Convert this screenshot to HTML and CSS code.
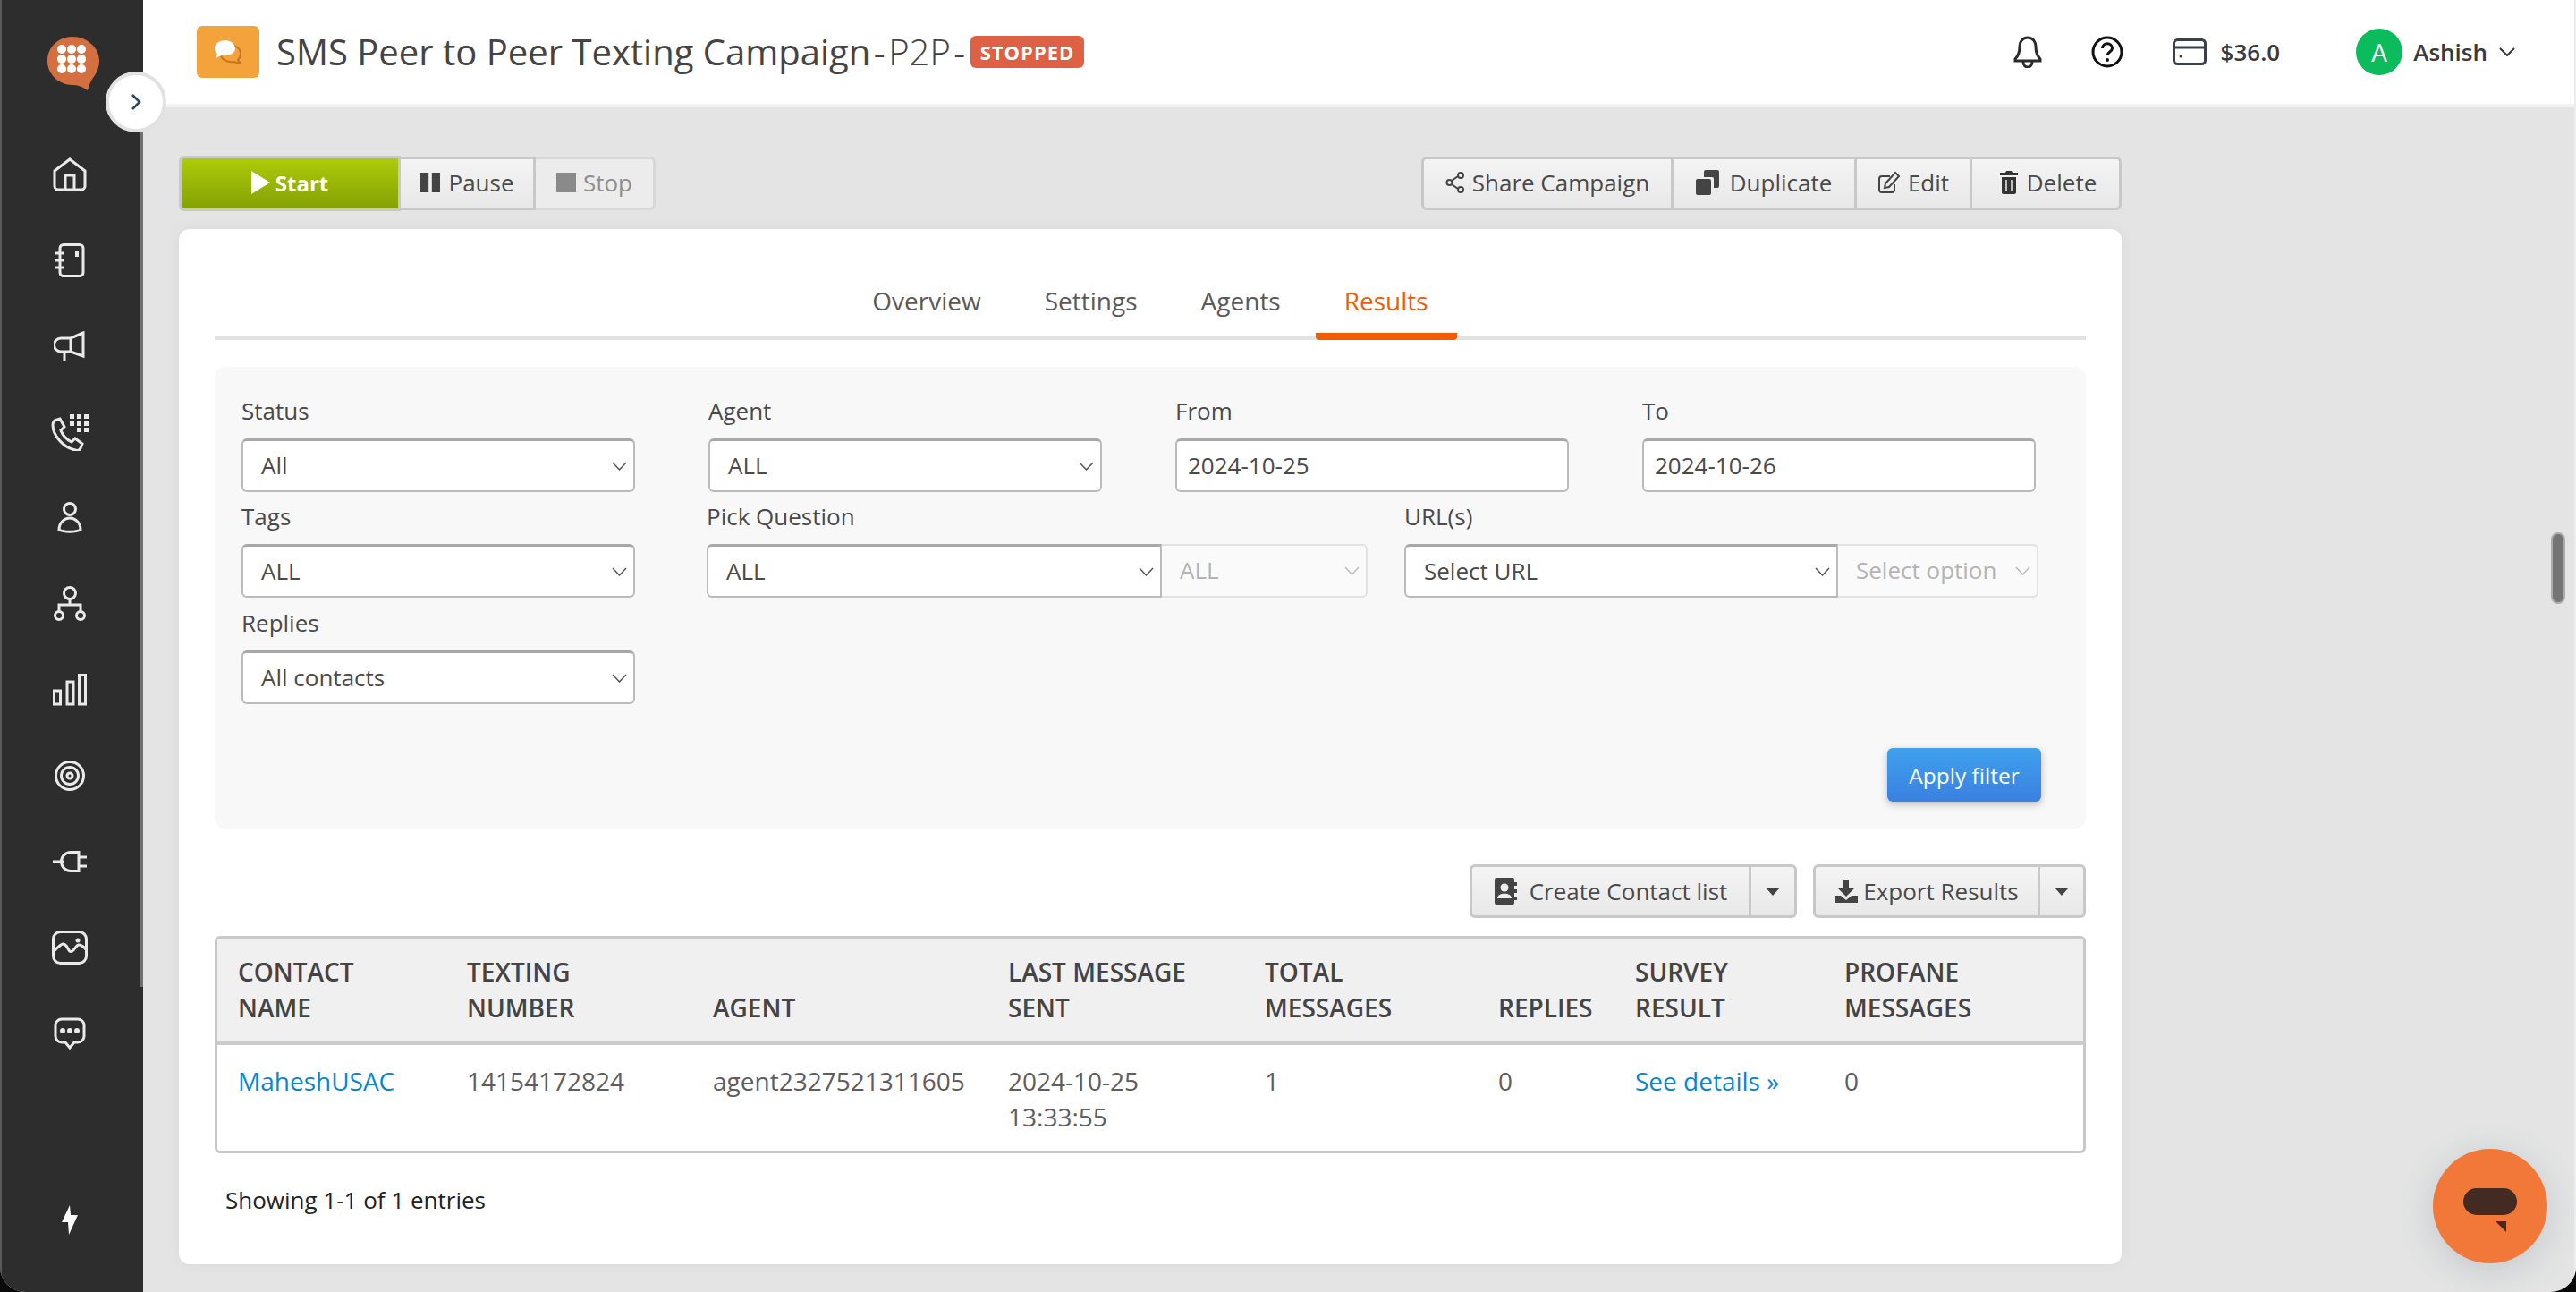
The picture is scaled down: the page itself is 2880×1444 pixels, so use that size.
FILE: index.html
```html
<!DOCTYPE html>
<html>
    <head>
        <title>SMS Peer to Peer Texting Campaign</title>
        <meta charset="UTF-8">
        <link rel="stylesheet" href="styles.css">
    </head>
    <body>
        <div class="app">
            <aside class="sidebar">
                <div class="logo">
                    <svg width="60" height="62" viewBox="0 0 60 62">
                        <path d="M29 1C13 1 1 13 1 28c0 16 14 27 28 27 5 0 10 1 17 6 2-6 3-10 6-14 4-5 7-12 7-19C59 13 45 1 29 1Z" fill="#d4703f"/>
                        <g fill="#fff">
                            <circle cx="17" cy="15" r="5"/><circle cx="28" cy="15" r="5"/><circle cx="39" cy="15" r="5"/>
                            <circle cx="17" cy="26" r="5"/><circle cx="28" cy="26" r="5"/><circle cx="39" cy="26" r="5"/>
                            <circle cx="17" cy="37" r="5"/><circle cx="28" cy="37" r="5"/><circle cx="39" cy="37" r="5"/>
                        </g>
                    </svg>
                </div>
                <nav class="nav">
                    <a class="nav-item"><svg class="nav-icon" width="38" height="38" viewBox="0 0 38 38"><path d="M2 15 19 2l17 13v17a4 4 0 0 1-4 4H6a4 4 0 0 1-4-4Z"/><path d="M14 36V20h10v16"/></svg></a>
                    <a class="nav-item"><svg class="nav-icon" width="34" height="38" viewBox="0 0 34 38"><rect x="6" y="1.5" width="26" height="35" rx="4"/><path d="M1 11h9M1 19h9M1 27h9"/><path d="M25 9v6" stroke-width="4"/></svg></a>
                    <a class="nav-item"><svg class="nav-icon" width="36" height="34" viewBox="0 0 36 34"><path d="M33 2 19 8H8a7 7 0 0 0 0 15h11l14 5Z"/><path d="M19 8v15M12 23v11"/></svg></a>
                    <a class="nav-item"><svg class="nav-icon" width="42" height="42" viewBox="0 0 42 42"><path d="M4 8l6-2 5 9-4 4c2 6 6 10 12 13l4-4 8 6-2 5c-1 2-3 3-6 2C13 38 2 24 2 13c0-2 1-4 2-5Z"/><g fill="#e9e9e9" stroke="none"><rect x="21" y="1" width="5" height="5"/><rect x="29" y="1" width="5" height="5"/><rect x="37" y="1" width="5" height="5"/><rect x="21" y="9" width="5" height="5"/><rect x="29" y="9" width="5" height="5"/><rect x="37" y="9" width="5" height="5"/><rect x="29" y="16" width="5" height="5"/><rect x="37" y="16" width="5" height="5"/></g></svg></a>
                    <a class="nav-item"><svg class="nav-icon" width="28" height="36" viewBox="0 0 28 36"><circle cx="14" cy="8" r="6.5"/><path d="M2 31c0-8 6-13 12-13s12 5 12 13c-5 3-19 3-24 0Z"/></svg></a>
                    <a class="nav-item"><svg class="nav-icon" width="36" height="40" viewBox="0 0 36 40"><circle cx="18" cy="8" r="6.5"/><path d="M18 15v6M6 28v-7h24v7"/><circle cx="6" cy="33" r="4.5"/><circle cx="30" cy="33" r="4.5"/></svg></a>
                    <a class="nav-item"><svg class="nav-icon" width="38" height="36" viewBox="0 0 38 36"><rect x="1.5" y="19" width="7" height="15"/><rect x="16" y="9" width="7" height="25"/><rect x="29.5" y="1.5" width="7" height="32.5"/></svg></a>
                    <a class="nav-item"><svg class="nav-icon" width="34" height="34" viewBox="0 0 34 34"><circle cx="17" cy="17" r="15.5"/><circle cx="17" cy="17" r="9.5"/><circle cx="17" cy="17" r="3"/></svg></a>
                    <a class="nav-item"><svg class="nav-icon" width="38" height="24" viewBox="0 0 38 24"><path d="M0 12h13"/><path d="M29 1.5H20a10.500 10.500 0 0 0 0 21h9Z"/><path d="M29 7h9M29 17h9"/></svg></a>
                    <a class="nav-item"><svg class="nav-icon" width="40" height="38" viewBox="0 0 40 38"><rect x="1.500" y="1.500" width="37" height="35" rx="8"/><path d="M2 23l8-7c2-2 4-1 6 1l3 5c1 2 3 2 5 0l4-5c2-2 6-1 10 4"/><circle cx="29" cy="11" r="2.500" fill="#e9e9e9" stroke="none"/></svg></a>
                    <a class="nav-item"><svg class="nav-icon" width="36" height="36" viewBox="0 0 36 36"><path d="M9 2h18a7 7 0 0 1 7 7v12a7 7 0 0 1-7 7h-4l-5 6-5-6H9a7 7 0 0 1-7-7V9a7 7 0 0 1 7-7Z"/><g fill="#e9e9e9" stroke="none"><circle cx="10" cy="15" r="3"/><circle cx="18" cy="15" r="3"/><circle cx="26" cy="15" r="3"/></g></svg></a>
                </nav>
                <div class="bolt">
                    <svg width="18" height="33" viewBox="0 0 18 33"><path d="M9 0 0 19h7l1 14 10-22H10Z" fill="#fff"/></svg>
                </div>
            </aside>

            <div class="side-scroll"></div>
            <button class="toggle">
                <svg width="12" height="20" viewBox="0 0 12 20"><path d="M2 2l8 8-8 8" fill="none" stroke="#2f4468" stroke-width="2.500"/></svg>
            </button>

            <div class="main">
                <header class="topbar">
                    <div class="title-icon">
                        <svg width="32" height="28" viewBox="0 0 32 28">
                            <path d="M16 6c8 0 14 4 14 10 0 3-1 5-3 7l3 4-8-2c-6 1-12-2-14-6Z" fill="#f3a23c" stroke="#c9741a" stroke-width="2"/>
                            <path d="M13 1C6 1 1 5 1 10c0 3 1 5 3 6l-2 5 7-3c7 1 15-2 15-8 0-5-5-9-11-9Z" fill="#fff"/>
                        </svg>
                    </div>
                    <h1 class="title">SMS Peer to Peer Texting Campaign<span class="title-sep">-</span><span class="title-type">P2P</span><span class="title-sep">-</span></h1>
                    <span class="badge">STOPPED</span>

                    <div class="top-right">
                        <svg class="top-bell" width="32" height="36" viewBox="0 0 32 36"><path d="M16 2c-6 0-9 5-9 10 0 7-2 11-5 14v2h28v-2c-3-3-5-7-5-14 0-5-3-10-9-10Z" fill="none" stroke="#2a2a2a" stroke-width="3"/><path d="M11 29c0 8 10 8 10 0" fill="none" stroke="#2a2a2a" stroke-width="3"/></svg>
                        <svg class="top-help" width="36" height="36" viewBox="0 0 36 36"><circle cx="18" cy="18" r="16" fill="none" stroke="#111" stroke-width="3"/><path d="M12.500 14c0-7 11-7 11 0 0 4-5.500 4-5.500 8" fill="none" stroke="#111" stroke-width="3"/><circle cx="18" cy="27" r="2" fill="#111"/></svg>
                        <div class="balance">
                            <svg width="38" height="30" viewBox="0 0 38 30"><rect x="1.500" y="1.500" width="35" height="27" rx="4" fill="none" stroke="#3a3f4a" stroke-width="3"/><path d="M2 10h34" stroke="#3a3f4a" stroke-width="3"/><circle cx="9" cy="20" r="1.500" fill="#3a3f4a"/></svg>
                            <span>$36.0</span>
                        </div>
                        <div class="user">
                            <span class="avatar">A</span>
                            <span class="user-name">Ashish</span>
                            <svg width="18" height="10" viewBox="0 0 18 10"><path d="M1 1l8 8 8-8" fill="none" stroke="#333" stroke-width="2"/></svg>
                        </div>
                    </div>
                </header>

                <div class="content">
                    <div class="toolbar">
                        <div class="btn-group">
                            <button class="btn btn-start"><svg width="21" height="26" viewBox="0 0 21 26"><path d="M0 0l21 13L0 26Z" fill="#fff"/></svg>Start</button>
                            <button class="btn btn-pause"><svg width="24" height="24" viewBox="0 0 24 24"><rect width="10" height="24" fill="#444"/><rect x="14" width="10" height="24" fill="#444"/></svg>Pause</button>
                            <button class="btn btn-stop"><svg width="22" height="22" viewBox="0 0 22 22"><rect width="22" height="22" fill="#8a8a8a"/></svg>Stop</button>
                        </div>
                        <div class="btn-group">
                            <button class="btn btn-share"><svg width="22" height="26" viewBox="0 0 22 26" fill="none" stroke="#444" stroke-width="2"><circle cx="4.500" cy="13" r="3"/><circle cx="17" cy="5" r="3"/><circle cx="17" cy="21" r="3"/><path d="M7 11l7-5M7 15l7 5"/></svg>Share Campaign</button>
                            <button class="btn btn-dup"><svg width="26" height="28" viewBox="0 0 26 28" fill="#444"><rect x="0" y="10" width="17" height="18" rx="2"/><path d="M9 8V2a2 2 0 0 1 2-2h13a2 2 0 0 1 2 2v16a2 2 0 0 1-2 2h-4V10a2 2 0 0 0-2-2Z"/></svg>Duplicate</button>
                            <button class="btn btn-edit"><svg width="26" height="26" viewBox="0 0 26 26" fill="none" stroke="#444" stroke-width="2"><path d="M19 15v6a3 3 0 0 1-3 3H5a3 3 0 0 1-3-3V9a3 3 0 0 1 3-3h9"/><path d="M9 14 20 2l4 4-11 12-5 1Z"/></svg>Edit</button>
                            <button class="btn btn-del"><svg width="20" height="26" viewBox="0 0 20 26"><path d="M7 0h6l1 2h6v3H0V2h6Z" fill="#333"/><path d="M2 7h16v17a2 2 0 0 1-2 2H4a2 2 0 0 1-2-2Z" fill="#333"/><path d="M7 10v12M13 10v12" stroke="#eee" stroke-width="1.500"/></svg>Delete</button>
                        </div>
                    </div>

                    <section class="card">
                        <div class="tabs">
                            <a class="tab">Overview</a>
                            <a class="tab">Settings</a>
                            <a class="tab">Agents</a>
                            <a class="tab tab-active">Results</a>
                        </div>

                        <div class="filters">
                            <div class="row row-four">
                                <div class="field">
                                    <label>Status</label>
                                    <div class="sel">All<svg class="chev" viewBox="0 0 17 10"><path d="M1 1l7.500 8L16 1"/></svg></div>
                                </div>
                                <div class="field">
                                    <label>Agent</label>
                                    <div class="sel">ALL<svg class="chev" viewBox="0 0 17 10"><path d="M1 1l7.500 8L16 1"/></svg></div>
                                </div>
                                <div class="field">
                                    <label>From</label>
                                    <div class="sel sel-date">2024-10-25</div>
                                </div>
                                <div class="field">
                                    <label>To</label>
                                    <div class="sel sel-date">2024-10-26</div>
                                </div>
                            </div>
                            <div class="row row-mid">
                                <div class="field">
                                    <label>Tags</label>
                                    <div class="sel">ALL<svg class="chev" viewBox="0 0 17 10"><path d="M1 1l7.500 8L16 1"/></svg></div>
                                </div>
                                <div class="field field-pick">
                                    <label>Pick Question</label>
                                    <div class="sel-pair">
                                        <div class="sel sel-first">ALL<svg class="chev" viewBox="0 0 17 10"><path d="M1 1l7.500 8L16 1"/></svg></div>
                                        <div class="sel sel-off">ALL<svg class="chev" viewBox="0 0 17 10"><path d="M1 1l7.500 8L16 1"/></svg></div>
                                    </div>
                                </div>
                                <div class="field field-url">
                                    <label>URL(s)</label>
                                    <div class="sel-pair">
                                        <div class="sel sel-first">Select URL<svg class="chev" viewBox="0 0 17 10"><path d="M1 1l7.500 8L16 1"/></svg></div>
                                        <div class="sel sel-off">Select option<svg class="chev" viewBox="0 0 17 10"><path d="M1 1l7.500 8L16 1"/></svg></div>
                                    </div>
                                </div>
                            </div>
                            <div class="row">
                                <div class="field">
                                    <label>Replies</label>
                                    <div class="sel">All contacts<svg class="chev" viewBox="0 0 17 10"><path d="M1 1l7.500 8L16 1"/></svg></div>
                                </div>
                            </div>
                            <div class="apply-row">
                                <button class="btn-apply">Apply filter</button>
                            </div>
                        </div>

                        <div class="actions">
                            <div class="btn-group">
                                <button class="btn btn-list"><svg width="26" height="30" viewBox="0 0 26 30"><path d="M3 0h18a2 2 0 0 1 2 2v26a2 2 0 0 1-2 2H3a2 2 0 0 1-2-2V2a2 2 0 0 1 2-2Z" fill="#444"/><circle cx="12" cy="11" r="4.500" fill="#eee"/><path d="M4 23c0-7 16-7 16 0Z" fill="#eee"/><path d="M23 5h3v4h-3ZM23 13h3v4h-3ZM23 21h3v4h-3Z" fill="#444"/></svg>Create Contact list</button>
                                <button class="btn btn-caret"><span class="caret"></span></button>
                            </div>
                            <div class="btn-group">
                                <button class="btn btn-export"><svg width="26" height="26" viewBox="0 0 26 26" fill="#444"><path d="M10 0h6v10h6l-9 9-9-9h6Z"/><path d="M0 18h7l6 5 6-5h7v8H0Z"/></svg>Export Results</button>
                                <button class="btn btn-caret"><span class="caret"></span></button>
                            </div>
                        </div>

                        <div class="table-wrap">
                            <table class="results">
                                <colgroup>
                                    <col class="c1"><col class="c2"><col class="c3"><col class="c4"><col class="c5"><col class="c6"><col class="c7"><col>
                                </colgroup>
                                <thead>
                                    <tr>
                                        <th>CONTACT<br>NAME</th>
                                        <th>TEXTING<br>NUMBER</th>
                                        <th>AGENT</th>
                                        <th>LAST MESSAGE<br>SENT</th>
                                        <th>TOTAL<br>MESSAGES</th>
                                        <th>REPLIES</th>
                                        <th>SURVEY<br>RESULT</th>
                                        <th>PROFANE<br>MESSAGES</th>
                                    </tr>
                                </thead>
                                <tbody>
                                    <tr>
                                        <td><a class="link">MaheshUSAC</a></td>
                                        <td>14154172824</td>
                                        <td>agent2327521311605</td>
                                        <td>2024-10-25<br>13:33:55</td>
                                        <td>1</td>
                                        <td>0</td>
                                        <td><a class="link">See details »</a></td>
                                        <td>0</td>
                                    </tr>
                                </tbody>
                            </table>
                        </div>
                        <p class="entries">Showing 1-1 of 1 entries</p>
                    </section>
                </div>
            </div>

            <div class="page-scroll"></div>
            <button class="chat-btn">
                <svg width="60" height="50" viewBox="0 0 60 50"><rect width="60" height="30" rx="15" fill="#432a22"/><path d="M36 37h12v12Z" fill="#432a22"/></svg>
            </button>
        </div>
    </body>
</html>
```

FILE: styles.css
```css
*{
    box-sizing: border-box;
}
html, body{
    margin: 0;
    height: 100%;
    background: #0a0a0a;
}
body{
    font-family: "Open Sans", "Liberation Sans", sans-serif;
    font-size: 26px;
    line-height: 40px;
    color: #4a4a4a;
    overflow: hidden;
}
button{
    font-family: inherit;
}
.app{
    position: relative;
    display: flex;
    width: 2880px;
    height: 1444px;
    background: #e4e4e4;
    border-radius: 0 0 28px 28px;
    overflow: hidden;
}

/* sidebar */
.sidebar{
    width: 160px;
    flex: none;
    display: flex;
    flex-direction: column;
    background: #2d2d2d;
    border-left: 2px solid #5a5a5a;
    padding-right: 6px;
}
.logo{
    height: 147px;
    padding: 40px 0 0 50px;
}
.nav{
    display: flex;
    flex-direction: column;
}
.nav-item{
    height: 96px;
    display: flex;
    align-items: center;
    justify-content: center;
}
.nav-icon{
    fill: none;
    stroke: #e9e9e9;
    stroke-width: 3;
}
.bolt{
    margin-top: auto;
    padding-bottom: 54px;
    text-align: center;
}
.side-scroll{
    position: absolute;
    left: 156px;
    top: 147px;
    width: 4px;
    height: 956px;
    background: #707070;
}
.toggle{
    position: absolute;
    left: 118px;
    top: 80px;
    width: 68px;
    height: 68px;
    padding: 0;
    border: 4px solid #e2e2e2;
    border-radius: 50%;
    background: #fff;
    display: flex;
    align-items: center;
    justify-content: center;
}

/* top header */
.main{
    flex: 1;
    min-width: 0;
    border-right: 2px solid #eee;
}
.topbar{
    height: 120px;
    display: flex;
    align-items: center;
    background: #fff;
    border-bottom: 4px solid #f2f2f2;
    padding-left: 60px;
}
.title-icon{
    width: 70px;
    height: 58px;
    background: #f3a23c;
    border-radius: 6px;
    display: flex;
    align-items: center;
    justify-content: center;
}
.title{
    margin: 0 0 0 19px;
    font-size: 40px;
    line-height: 58px;
    font-weight: 400;
    color: #444;
}
.title-sep{
    margin: 0 3.5px;
}
.title-type{
    font-weight: 300;
}
.badge{
    margin-left: 2px;
    height: 36px;
    padding: 0 11px;
    background: #de6145;
    border-radius: 6px;
    color: #fff;
    font-size: 22px;
    line-height: 36px;
    font-weight: 700;
    letter-spacing: 1px;
}
.top-right{
    margin-left: auto;
    display: flex;
    align-items: center;
    padding-right: 66px;
}
.top-bell{
    margin-right: 55px;
}
.top-help{
    margin-right: 55px;
}
.balance{
    display: flex;
    align-items: center;
    gap: 16px;
    font-size: 26px;
    font-weight: 600;
    color: #3a3a3a;
    margin-right: 85px;
}
.user{
    display: flex;
    align-items: center;
}
.avatar{
    width: 52px;
    height: 52px;
    border-radius: 50%;
    background: #0cbb5b;
    color: #fff;
    text-align: center;
    line-height: 52px;
    font-size: 28px;
}
.user-name{
    margin: 0 13px 0 12px;
    font-weight: 600;
    font-size: 26px;
    color: #3a3a3a;
}

/* page content */
.content{
    padding: 55px 0 0 40px;
    width: 2212px;
}
.toolbar{
    display: flex;
    justify-content: space-between;
    height: 60px;
    margin-bottom: 21px;
}
.btn-group{
    display: flex;
}
.btn{
    height: 60px;
    display: flex;
    align-items: center;
    justify-content: center;
    gap: 8px;
    padding: 0 0 2px;
    border: 3px solid #c8c8c8;
    border-left-width: 0;
    background: linear-gradient(#f4f4f4, #e8e8e8);
    color: #4a4a4a;
    font-size: 26px;
}
.btn-group .btn:first-child{
    border-left-width: 3px;
    border-radius: 6px 0 0 6px;
}
.btn-group .btn:last-child{
    border-radius: 0 6px 6px 0;
}
.btn-start{
    width: 248px;
    height: 62px;
    margin-top: -1px;
    gap: 6px;
    background: linear-gradient(#aecb0a, #84a105);
    color: #fff;
    font-size: 24px;
    font-weight: 700;
}
.btn-pause{
    width: 151px;
}
.btn-pause svg{
    height: 22px;
}
.btn-stop{
    width: 134px;
    color: #8f8f8f;
    background: #ececec;
    border-color: #d8d8d8;
}
.btn-share{
    width: 282px;
}
.btn-dup{
    width: 205px;
    gap: 12px;
}
.btn-edit{
    width: 129px;
}
.btn-del{
    width: 167px;
    gap: 10px;
    padding-left: 6px;
}
.actions .btn{
    padding-bottom: 0;
}
.btn-list{
    width: 315px;
    gap: 14px;
}
.btn-export{
    width: 254px;
    gap: 6px;
}
.btn-caret{
    width: 51px;
}
.caret{
    border-left: 8px solid transparent;
    border-right: 8px solid transparent;
    border-top: 9px solid #444;
}

/* card */
.card{
    background: #fff;
    border-radius: 12px;
    box-shadow: 0 0 16px rgba(0,0,0,.05);
    padding: 0 40px 50px;
}
.tabs{
    height: 124px;
    display: flex;
    justify-content: center;
    align-items: flex-end;
    border-bottom: 4px solid #e2e2e2;
}
.tab{
    height: 84px;
    line-height: 80px;
    padding: 0 32px;
    margin: 0 3.5px -4px;
    border-bottom: 8px solid transparent;
    color: #5a5a5a;
    font-size: 28px;
}
.tab-active{
    color: #f25c05;
    border-bottom-color: #f25c05;
    border-radius: 0 0 4px 4px;
}

/* filters */
.filters{
    margin-top: 30px;
    padding: 32px 50px 30px 30px;
    background: #f8f8f8;
    border-radius: 12px;
}
.row{
    display: flex;
    margin-bottom: 10px;
}
.row-four{
    gap: 82px;
}
.row-mid{
    gap: 80px;
    margin-bottom: 11px;
}
.field{
    width: 440px;
    flex: none;
}
.field label{
    display: block;
    line-height: 34px;
    margin-bottom: 14px;
}
.field-pick{
    width: 739px;
    margin-right: -39px;
}
.field-url{
    width: 709px;
}
.sel{
    position: relative;
    height: 60px;
    line-height: 54px;
    padding-left: 20px;
    background: #fff;
    border: 2px solid #bbb;
    border-top: 3px solid #a8a8a8;
    border-radius: 6px;
    color: #4a4a4a;
    white-space: nowrap;
}
.sel-date{
    padding-left: 12px;
}
.chev{
    position: absolute;
    right: 7px;
    top: 23px;
    width: 17px;
    height: 10px;
    fill: none;
    stroke: #555;
    stroke-width: 1.500;
}
.sel-pair{
    display: flex;
}
.sel-first{
    flex: 1;
    border-radius: 6px 0 0 6px;
}
.sel-off{
    flex: none;
    width: 230px;
    padding-left: 20px;
    background: #fafafa;
    color: #b4b4b4;
    border: 2px solid #e2e2e2;
    border-left: 0;
    border-radius: 0 6px 6px 0;
}
.sel-off .chev{
    stroke: #bbb;
}
.field-url .sel-off{
    width: 224px;
}
.apply-row{
    display: flex;
    justify-content: flex-end;
    margin-top: 49px;
}
.btn-apply{
    width: 172px;
    height: 60px;
    padding: 0;
    border: 0;
    border-radius: 6px;
    background: linear-gradient(#3fa1ec, #3a80e0);
    box-shadow: 0 3px 8px rgba(0,0,0,.25);
    color: #fff;
    font-size: 24.5px;
}

/* results */
.actions{
    display: flex;
    justify-content: flex-end;
    gap: 18px;
    margin-top: 40px;
    height: 60px;
}
.table-wrap{
    margin-top: 20px;
    border: 3px solid #c8c8c8;
    border-radius: 6px;
    overflow: hidden;
}
.results{
    width: 100%;
    border-collapse: collapse;
    table-layout: fixed;
    font-size: 28px;
}
.c1{ width: 256px; }
.c2{ width: 275px; }
.c3{ width: 330px; }
.c4{ width: 287px; }
.c5{ width: 261px; }
.c6{ width: 153px; }
.c7{ width: 234px; }
.results th{
    background: #f0f0f0;
    border-bottom: 4px solid #ccc;
    padding: 17px 0 18px 23px;
    text-align: left;
    vertical-align: bottom;
    font-weight: 600;
    color: #444;
}
.results td{
    padding: 20px 0 18px 23px;
    vertical-align: top;
    color: #5e5e5e;
    white-space: nowrap;
}
.link{
    color: #0a86cf;
}
.entries{
    margin: 32px 0 2px 12px;
    color: #222;
}

/* floating */
.page-scroll{
    position: absolute;
    left: 2852px;
    top: 595px;
    width: 16px;
    height: 80px;
    background: #747474;
    border: 2px solid #aaa;
    border-radius: 8px;
}
.chat-btn{
    position: absolute;
    left: 2720px;
    top: 1284px;
    width: 128px;
    height: 128px;
    padding: 14px 0 0;
    border: 0;
    border-radius: 50%;
    background: #f2783a;
    box-shadow: 0 8px 40px rgba(60,90,100,.2);
}
```
